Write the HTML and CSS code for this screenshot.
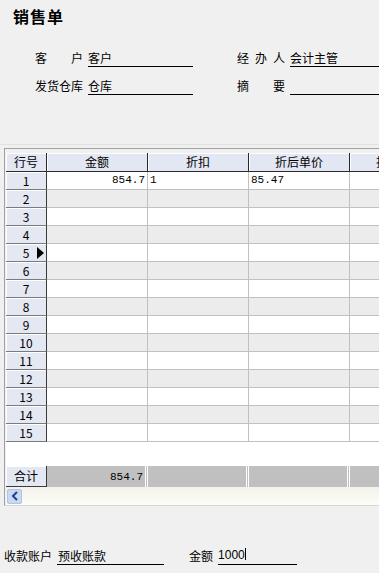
FILE: index.html
```html
<!DOCTYPE html>
<html>

<head>
    <meta charset="UTF-8">
    <title>销售单</title>
    <!-- Styling for the order form -->
    <link rel="stylesheet" href="styles.css">
</head>

<body>
    <div class="title">销售单</div>

    <div class="form">
        <div class="form-row">
            <label class="lbl">客户</label>
            <span class="field">客户</span>
            <label class="lbl lbl-right">经办人</label>
            <span class="field field-wide">会计主管</span>
        </div>
        <div class="form-row">
            <label class="lbl">发货仓库</label>
            <span class="field">仓库</span>
            <label class="lbl lbl-right">摘要</label>
            <span class="field field-wide"></span>
        </div>
    </div>

    <div class="grid-wrap">
        <div class="grid">
            <table class="sheet">
                <colgroup>
                    <col class="c-no">
                    <col class="c-data">
                    <col class="c-data">
                    <col class="c-data">
                    <col class="c-data">
                </colgroup>
                <thead>
                    <tr>
                        <th class="corner">行号</th>
                        <th>金额</th>
                        <th>折扣</th>
                        <th>折后单价</th>
                        <th>折扣金额</th>
                    </tr>
                </thead>
                <tbody>
                    <tr><td class="rno">1</td><td class="num right">854.7</td><td class="num">1</td><td class="num">85.47</td><td></td></tr>
                    <tr class="alt"><td class="rno">2</td><td></td><td></td><td></td><td></td></tr>
                    <tr><td class="rno">3</td><td></td><td></td><td></td><td></td></tr>
                    <tr class="alt"><td class="rno">4</td><td></td><td></td><td></td><td></td></tr>
                    <tr><td class="rno current">5</td><td></td><td></td><td></td><td></td></tr>
                    <tr class="alt"><td class="rno">6</td><td></td><td></td><td></td><td></td></tr>
                    <tr><td class="rno">7</td><td></td><td></td><td></td><td></td></tr>
                    <tr class="alt"><td class="rno">8</td><td></td><td></td><td></td><td></td></tr>
                    <tr><td class="rno">9</td><td></td><td></td><td></td><td></td></tr>
                    <tr class="alt"><td class="rno">10</td><td></td><td></td><td></td><td></td></tr>
                    <tr><td class="rno">11</td><td></td><td></td><td></td><td></td></tr>
                    <tr class="alt"><td class="rno">12</td><td></td><td></td><td></td><td></td></tr>
                    <tr><td class="rno">13</td><td></td><td></td><td></td><td></td></tr>
                    <tr class="alt"><td class="rno">14</td><td></td><td></td><td></td><td></td></tr>
                    <tr><td class="rno">15</td><td></td><td></td><td></td><td></td></tr>
                </tbody>
            </table>
            <div class="blank"></div>
            <table class="sheet foot">
                <colgroup>
                    <col class="c-no">
                    <col class="c-data">
                    <col class="c-data">
                    <col class="c-data">
                    <col class="c-data">
                </colgroup>
                <tr>
                    <td class="rno total">合计</td>
                    <td class="num right">854.7</td>
                    <td></td>
                    <td></td>
                    <td></td>
                </tr>
            </table>
            <div class="hscroll">
                <span class="arrow-btn">
                    <svg width="8" height="10" viewBox="0 0 8 10">
                        <path d="M6 1 L2 5 L6 9" fill="none" stroke="#24418c" stroke-width="2"/>
                    </svg>
                </span>
            </div>
        </div>
    </div>

    <div class="pay-row">
        <label class="pay-lbl">收款账户</label>
        <span class="field pay-acct">预收账款</span>
        <label class="pay-lbl pay-amt-lbl">金额</label>
        <span class="field pay-amt">1000<span class="caret"></span></span>
    </div>
</body>

</html>
```

FILE: styles.css
```css
body {
    margin: 0;
    background-color: #F0F0F0;
    color: #000000;
    font-family: "Noto Sans CJK SC", "Noto Sans", sans-serif;
    font-size: 12px;
    width: 379px;
    height: 573px;
    overflow: hidden;
}

.title {
    height: 39px;
    box-sizing: border-box;
    padding: 5px 0 0 13px;
    font-size: 16px;
    font-weight: bold;
    letter-spacing: 1px;
    line-height: 22px;
}

.form-row {
    display: flex;
    align-items: flex-end;
    height: 28px;
    padding-left: 35px;
}

.lbl {
    width: 48px;
    margin-right: 5px;
    text-align: justify;
    text-align-last: justify;
    line-height: 16px;
    height: 17px;
}

.lbl-right {
    margin-left: 44px;
}

.field {
    display: inline-block;
    height: 16px;
    line-height: 15px;
    border-bottom: 1px solid #000000;
    width: 105px;
    white-space: nowrap;
}

.field-wide {
    flex: 1;
}

/* grid frame */
.grid-wrap {
    margin-top: 49px;
    border-top: 1px solid #E2E2E2;
    padding-top: 3px;
}

.grid {
    margin-left: 4px;
    border-top: 1px solid #A0A0A0;
    border-left: 1px solid #A0A0A0;
    padding: 4px 0 0 1px;
    overflow: hidden;
    border-bottom: 1px solid #D8D8D8;
}

.sheet {
    border-collapse: separate;
    border-spacing: 0;
    table-layout: fixed;
    width: 445px;
}

.c-no {
    width: 41px;
}

.c-data {
    width: 101px;
}

.sheet th {
    height: 18px;
    padding: 0;
    background-color: #E2E7F3;
    border-right: 1px solid #2A2A2A;
    border-bottom: 1px solid #2A2A2A;
    box-shadow: inset 1px 1px 0 #FFFFFF;
    font-weight: normal;
    line-height: 18px;
    text-align: center;
}

.sheet td {
    height: 17px;
    padding: 0 2px;
    border-right: 1px solid #C0C0C0;
    border-bottom: 1px solid #C0C0C0;
    background-color: #FFFFFF;
    line-height: 17px;
    white-space: nowrap;
    overflow: hidden;
}

.sheet tr.alt td {
    background-color: #ECECEC;
}

.sheet td.rno {
    background-color: #E4E8F2;
    border-right: 1px solid #3A3A3A;
    border-bottom: 1px solid #7A7A7A;
    box-shadow: inset 1px 1px 0 #FFFFFF;
    text-align: center;
    position: relative;
}

.sheet tr.alt td.rno {
    background-color: #E4E8F2;
}

.current::after {
    content: "";
    position: absolute;
    right: 2px;
    top: 3px;
    border-top: 6px solid transparent;
    border-bottom: 6px solid transparent;
    border-left: 7px solid #000000;
}

.num {
    font-family: "Liberation Mono", monospace;
    font-size: 11px;
}

.right {
    text-align: right;
}

.blank {
    height: 24px;
    background-color: #FFFFFF;
    border-top: 1px solid #C0C0C0;
    margin-top: -1px;
}

.foot td {
    height: 20px;
    line-height: 20px;
    background-color: #C0C0C0;
    border-bottom: none;
    border-right: 3px double #FFFFFF;
}

.foot td.total {
    height: 20px;
    line-height: 20px;
    border-bottom: 1px solid #3A3A3A;
}

.hscroll {
    height: 18px;
    background: linear-gradient(#F3F3EB, #FDFDF7);
    display: flex;
    align-items: center;
}

.arrow-btn {
    width: 15px;
    height: 15px;
    margin-left: 1px;
    box-sizing: border-box;
    background-color: #C9D9F3;
    border: 1px solid #AFC3E6;
    border-radius: 2px;
    display: flex;
    align-items: center;
    justify-content: center;
}

/* payment line */
.pay-row {
    display: flex;
    align-items: flex-end;
    height: 28px;
    margin-top: 31px;
    padding-left: 4px;
}

.pay-lbl {
    line-height: 16px;
    height: 17px;
    margin-right: 5px;
}

.pay-acct {
    width: 106px;
    padding-left: 1px;
}

.pay-amt-lbl {
    margin-left: 25px;
}

.pay-amt {
    width: 79px;
    font-family: "Liberation Sans", sans-serif;
}

.caret {
    display: inline-block;
    width: 1px;
    height: 12px;
    background-color: #000000;
    vertical-align: -1px;
}
```
